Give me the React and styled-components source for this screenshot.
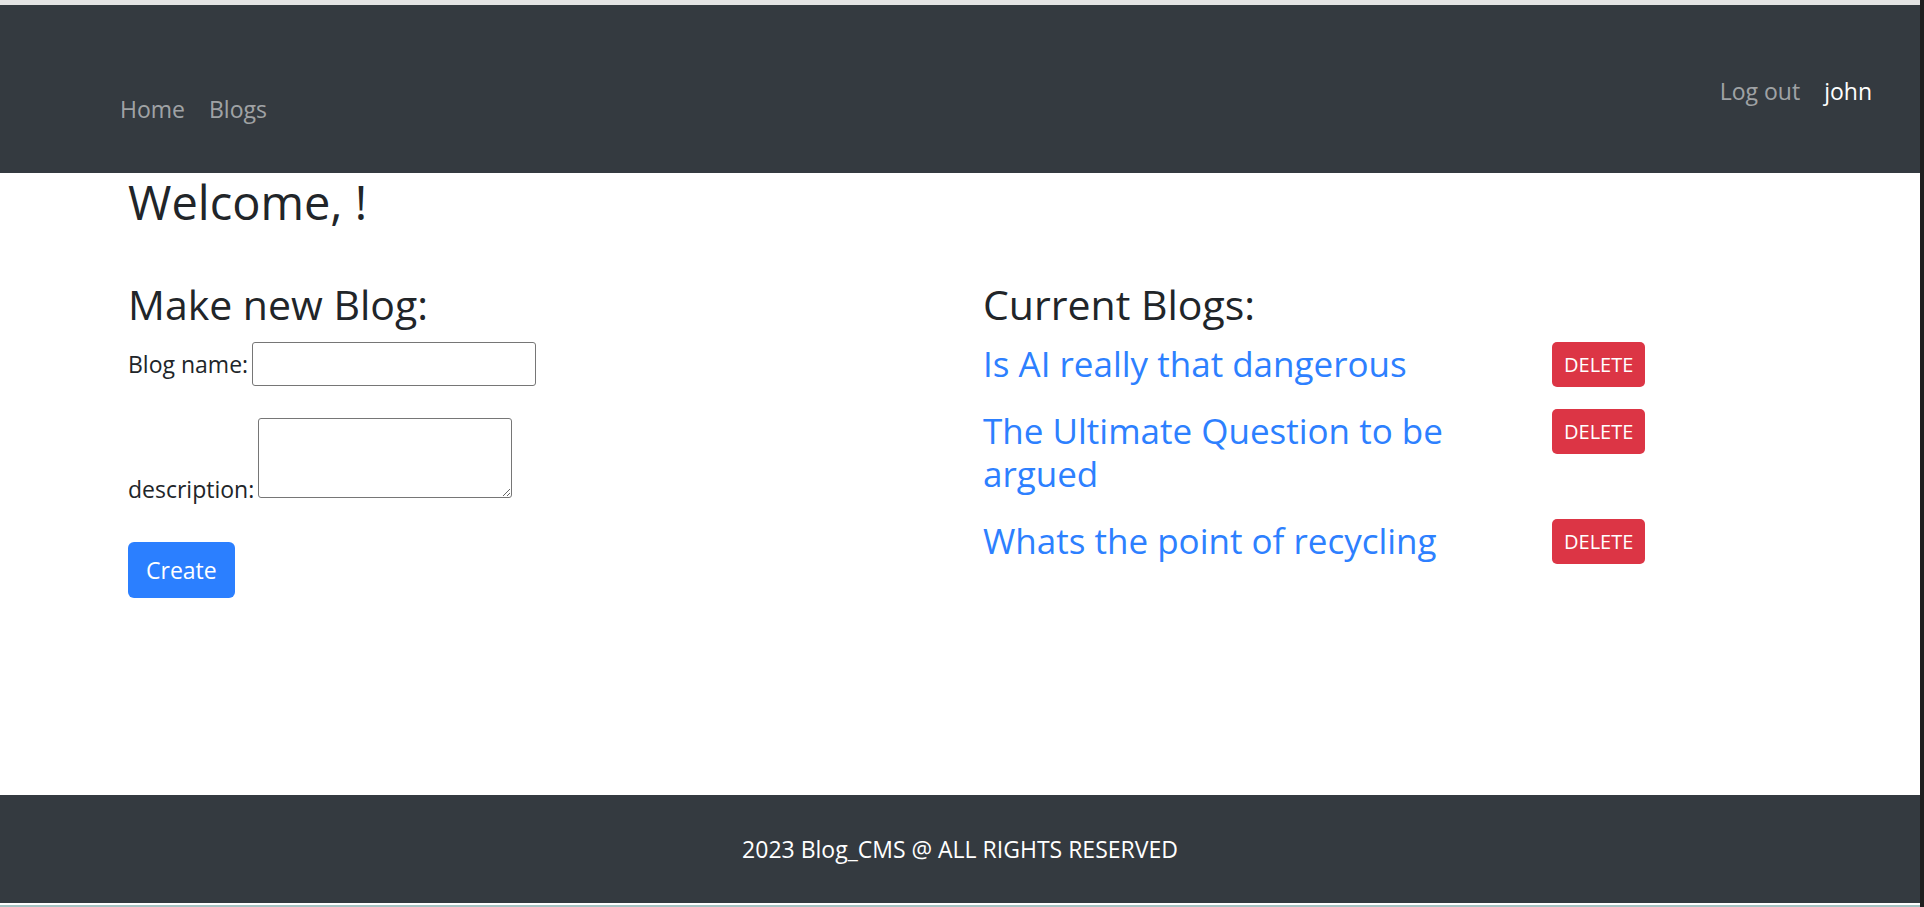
import React from "react";
import styled, { createGlobalStyle } from "styled-components";

const GlobalStyle = createGlobalStyle`
  html, body {
    margin: 0;
    padding: 0;
    overflow: hidden;
  }
  body {
    font-family: "Open Sans", "Noto Sans", sans-serif;
    font-size: 23px;
    line-height: 36px;
    color: #212529;
    background: #ffffff;
  }
  * {
    box-sizing: border-box;
  }
`;

const StyledPage = styled.div`
  height: 907px;
  display: flex;
  flex-direction: column;
  border-right: 4px solid #1f1f1f;
`;

const StyledTopStrip = styled.div`
  height: 5px;
  background: #e4e4e4;
`;

const StyledNavbar = styled.nav`
  height: 168px;
  background: #343a40;
  display: flex;
  justify-content: space-between;
  align-items: flex-start;
  padding: 0 48px 0 120px;
`;

const StyledNavGroup = styled.div`
  display: flex;
  gap: 24px;
  margin-top: ${(p) => p.offset}px;
`;

const StyledNavLink = styled.a`
  color: ${(p) => (p.active ? "#ffffff" : "rgba(255, 255, 255, 0.55)")};
  text-decoration: none;
  font-size: 23px;
  line-height: 36px;
`;

const StyledMain = styled.main`
  flex: 1;
  padding-left: 128px;
`;

const StyledWelcome = styled.h2`
  margin: 0 0 48px;
  font-size: 47px;
  line-height: 58px;
  font-weight: 500;
`;

const StyledColumns = styled.div`
  display: grid;
  grid-template-columns: 855px 1fr;
`;

const StyledSectionTitle = styled.h3`
  margin: 0 0 13px;
  font-size: 41px;
  line-height: 50px;
  font-weight: 500;
`;

const StyledFormRow = styled.div`
  margin-bottom: ${(p) => p.gap}px;
`;

const StyledLabel = styled.label`
  margin-right: 4px;
`;

const StyledInput = styled.input`
  width: 284px;
  height: 44px;
  font: inherit;
  padding: 3px 4px;
  border: 1px solid #767676;
  border-radius: 3px;
  background: #ffffff;
`;

const StyledTextarea = styled.textarea`
  width: 254px;
  height: 80px;
  font: inherit;
  padding: 3px 4px;
  border: 1px solid #767676;
  border-radius: 3px;
  resize: both;
`;

const StyledCreateButton = styled.button`
  height: 56px;
  padding: 0 18px;
  font: inherit;
  color: #ffffff;
  background: #2b7fff;
  border: none;
  border-radius: 6px;
`;

const StyledBlogRow = styled.div`
  display: flex;
  align-items: flex-start;
`;

const StyledBlogTitle = styled.a`
  width: 540px;
  margin-right: 29px;
  margin-bottom: 24px;
  font-size: 35px;
  line-height: 43px;
  font-weight: 500;
  color: #2d80ff;
  text-decoration: none;
`;

const StyledDeleteButton = styled.button`
  height: 45px;
  padding: 0 12px;
  font-family: inherit;
  font-size: 20px;
  color: #ffffff;
  background: #dc3545;
  border: none;
  border-radius: 5px;
  text-transform: uppercase;
`;

const StyledFooter = styled.footer`
  height: 108px;
  background: #343a40;
  color: #ffffff;
  display: flex;
  align-items: center;
  justify-content: center;
  font-size: 23px;
`;

const StyledBottomEdge = styled.div`
  height: 4px;
  border-top: 2px solid #ffffff;
  background: #a6c3c3;
`;

const blogs = [
  "Is AI really that dangerous",
  "The Ultimate Question to be argued",
  "Whats the point of recycling",
];

export default function App() {
  return (
    <>
      <GlobalStyle />
      <StyledPage>
        <StyledTopStrip />
        <StyledNavbar>
          <StyledNavGroup offset={86}>
            <StyledNavLink href="#">Home</StyledNavLink>
            <StyledNavLink href="#">Blogs</StyledNavLink>
          </StyledNavGroup>
          <StyledNavGroup offset={68}>
            <StyledNavLink href="#">Log out</StyledNavLink>
            <StyledNavLink href="#" active>
              john
            </StyledNavLink>
          </StyledNavGroup>
        </StyledNavbar>
        <StyledMain>
          <StyledWelcome>Welcome, !</StyledWelcome>
          <StyledColumns>
            <div>
              <StyledSectionTitle>Make new Blog:</StyledSectionTitle>
              <StyledFormRow gap={32}>
                <StyledLabel>Blog name:</StyledLabel>
                <StyledInput type="text" />
              </StyledFormRow>
              <StyledFormRow gap={35}>
                <StyledLabel>description:</StyledLabel>
                <StyledTextarea />
              </StyledFormRow>
              <StyledCreateButton>Create</StyledCreateButton>
            </div>
            <div>
              <StyledSectionTitle>Current Blogs:</StyledSectionTitle>
              {blogs.map((title) => (
                <StyledBlogRow key={title}>
                  <StyledBlogTitle href="#">{title}</StyledBlogTitle>
                  <StyledDeleteButton>Delete</StyledDeleteButton>
                </StyledBlogRow>
              ))}
            </div>
          </StyledColumns>
        </StyledMain>
        <StyledFooter>2023 Blog_CMS @ ALL RIGHTS RESERVED</StyledFooter>
        <StyledBottomEdge />
      </StyledPage>
    </>
  );
}
